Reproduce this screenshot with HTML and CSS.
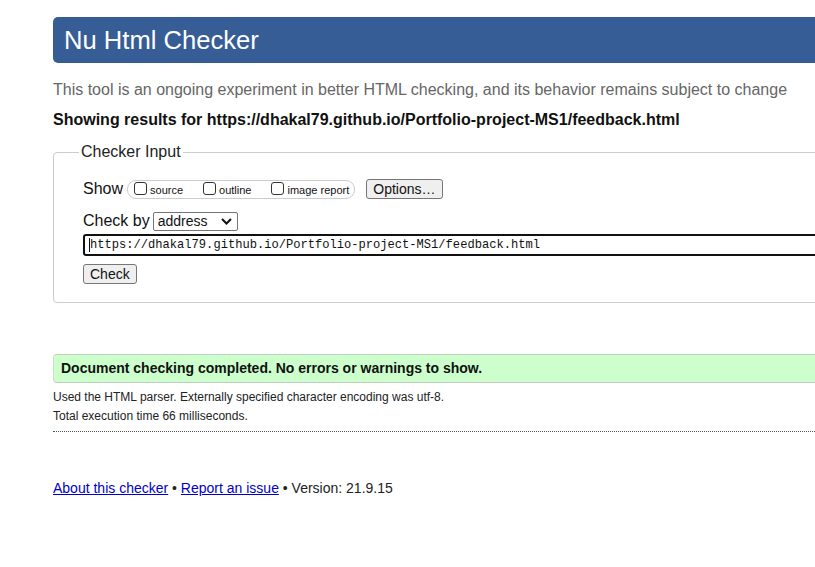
FILE: index.html
```html
<!DOCTYPE html>
<html lang="en">
<head>
<meta charset="utf-8">
<title>Nu Html Checker</title>
<link rel="stylesheet" href="styles.css">
</head>
<body>
<div class="page">
  <h1 class="banner">Nu Html Checker</h1>
  <p class="intro">This tool is an ongoing experiment in better HTML checking, and its behavior remains subject to change</p>
  <p class="showing">Showing results for https://dhakal79.github.io/Portfolio-project-MS1/feedback.html</p>

  <fieldset class="checker">
    <legend>Checker Input</legend>
    <div class="row show-row">
      <span class="lbl">Show</span>
      <span class="opts">
        <label class="opt"><input type="checkbox"> source</label>
        <label class="opt"><input type="checkbox"> outline</label>
        <label class="opt"><input type="checkbox"> image report</label>
      </span>
      <button class="btn options" type="button">Options…</button>
    </div>
    <div class="row by-row">
      <span class="lbl">Check by</span>
      <span class="select">address<svg class="chev" width="11" height="7" viewBox="0 0 11 7"><path d="M1 1l4.5 4.5L10 1" fill="none" stroke="#111" stroke-width="2"/></svg></span>
    </div>
    <div class="url"><span class="caret"></span>https://dhakal79.github.io/Portfolio-project-MS1/feedback.html</div>
    <button class="btn check" type="button">Check</button>
  </fieldset>

  <div class="success">Document checking completed. No errors or warnings to show.</div>
  <div class="details">
    <p>Used the HTML parser. Externally specified character encoding was utf-8.</p>
    <p>Total execution time 66 milliseconds.</p>
  </div>

  <p class="footer"><a href="#">About this checker</a> • <a href="#">Report an issue</a> • Version: 21.9.15</p>
</div>
</body>
</html>
```

FILE: styles.css
```css
html, body {
  margin: 0;
  padding: 0;
  overflow: hidden;
  background: #fff;
}

body {
  font-family: "Liberation Sans", Arial, sans-serif;
  color: #111;
}

.page {
  width: 1000px;
  padding: 17px 0 0 53px;
}

.banner {
  margin: 0;
  height: 46px;
  line-height: 46px;
  background: #365d95;
  color: #fff;
  font-size: 25.6px;
  font-weight: normal;
  padding-left: 11px;
  border-radius: 5px;
}

.intro {
  margin: 18px 0 0;
  font-size: 16px;
  line-height: 18px;
  color: #666;
}

.showing {
  margin: 12px 0 0;
  font-size: 16px;
  line-height: 18px;
  font-weight: bold;
  color: #111;
}

.checker {
  margin: 14px 0 0;
  border: 1px solid #ccc;
  border-radius: 4px;
  padding: 10px 0 18px 29px;
  min-width: 0;
}

.checker legend {
  font-size: 16px;
  padding: 0 2px;
  margin-left: -4px;
  color: #222;
}

.row {
  display: flex;
  align-items: center;
}

.lbl {
  font-size: 16px;
  color: #111;
}

.show-row {
  height: 22px;
  margin-top: 7px;
}

.opts {
  display: flex;
  align-items: center;
  margin-left: 4px;
  height: 17px;
  border: 1px solid #ccc;
  border-radius: 9px;
  padding: 0 5px 0 6px;
  gap: 20px;
}

.opt {
  display: flex;
  align-items: center;
  font-size: 11px;
  color: #111;
  padding-top: 1px;
}

.opt input {
  appearance: none;
  -webkit-appearance: none;
  width: 13px;
  height: 13px;
  margin: 0 3px 2px 0;
  border: 1px solid #333;
  border-radius: 3px;
  background: #fff;
}

.btn {
  font-family: "Liberation Sans", Arial, sans-serif;
  font-size: 14px;
  color: #111;
  background: #efefef;
  border: 1px solid #767676;
  border-radius: 3px;
  padding: 0 6px;
  height: 20px;
  line-height: 18px;
}

.options {
  margin-left: 11px;
}

.by-row {
  margin-top: 11px;
  height: 20px;
}

.select {
  display: flex;
  align-items: center;
  justify-content: space-between;
  height: 17px;
  margin-left: 3px;
  border: 1px solid #767676;
  border-radius: 2px;
  font-size: 14px;
  padding: 0 5px 0 4px;
  box-sizing: content-box;
  width: 74px;
}

.chev {
  display: block;
}

.url {
  margin-top: 3px;
  height: 18px;
  line-height: 18px;
  border: 2px solid #111;
  border-radius: 3px;
  font-family: "Liberation Mono", "DejaVu Sans Mono", monospace;
  font-size: 12.1px;
  color: #111;
  padding-left: 4px;
  display: flex;
  align-items: center;
}

.caret {
  display: inline-block;
  width: 1px;
  height: 14px;
  background: #111;
}

.check {
  margin-top: 8px;
  display: block;
}

.success {
  margin-top: 51px;
  height: 27px;
  line-height: 27px;
  background: #ccffcc;
  border-top: 1px solid #bfcfbf;
  border-bottom: 1px solid #bfcfbf;
  border-left: 1px solid #cde0cd;
  border-radius: 4px 0 0 4px;
  font-size: 14px;
  font-weight: bold;
  padding-left: 7px;
  color: #111;
}

.details {
  border-bottom: 1px dotted #555;
  padding: 5px 0 5px;
}

.details p {
  margin: 0;
  font-size: 12px;
  line-height: 19px;
  color: #222;
}

.footer {
  margin: 47px 0 0;
  font-size: 14px;
  line-height: 18px;
  color: #222;
}

.footer a {
  color: #00c;
  text-decoration: underline;
}
```
